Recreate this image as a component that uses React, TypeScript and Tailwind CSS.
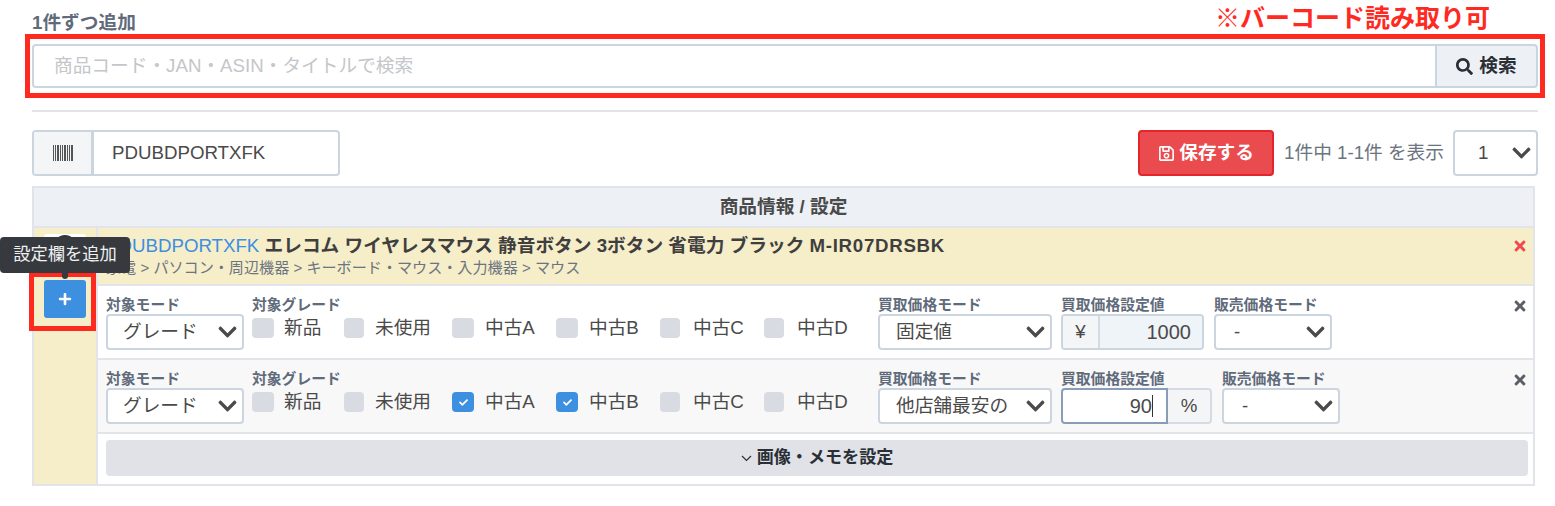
import React from "react";
import { FaChevronDown, FaTimes, FaPlus, FaSearch, FaCheck, FaRegSave } from "react-icons/fa";

const font = "font-['Liberation_Sans','Noto_Sans_CJK_JP',sans-serif]";

function Select({ value, className }: { value: string; className: string }) {
  return (
    <div className={`relative h-[36px] rounded-[4px] border-2 border-[#cbd5e0] bg-white text-[18.7px] text-[#4a4a4a] flex items-center ${className}`}>
      <span className="whitespace-nowrap">{value}</span>
      <FaChevronDown className="absolute right-[4px] top-1/2 -translate-y-1/2 w-[21px] h-[21px] text-[#4a4a4a]" />
    </div>
  );
}

function Grade({ label, checked, cell, box, gap }: { label: string; checked?: boolean; cell: string; box: string; gap: string }) {
  return (
    <div className={`flex items-center shrink-0 ${cell} ${gap}`}>
      <span className={`${box} h-[20px] rounded-[4px] flex items-center justify-center ${checked ? "bg-[#3d8fe0]" : "bg-[#d8dce2]"}`}>
        {checked && <FaCheck className="w-[11px] h-[9px] text-white" />}
      </span>
      <span className="text-[18.7px] leading-[20px] text-[#4a4a4a] whitespace-nowrap">{label}</span>
    </div>
  );
}

function Label({ children }: { children: React.ReactNode }) {
  return <div className="text-[14.8px] leading-[18px] font-bold text-[#5f6b7a] whitespace-nowrap">{children}</div>;
}

function Row({ checkedAB, alt }: { checkedAB?: boolean; alt?: boolean }) {
  return (
    <div className={`relative h-[74px] pl-[8px] pt-[10px] flex border-b-2 border-[#e2e4ea] ${alt ? "bg-[#f8f8f9]" : "bg-white"}`}>
      <div className="w-[146px] shrink-0">
        <Label>対象モード</Label>
        <Select value="グレード" className="w-[138px] pl-[15px]" />
      </div>
      <div className="w-[626px] shrink-0">
        <Label>対象グレード</Label>
        <div className="flex mt-[4px]">
          <Grade label="新品" cell="w-[92px]" box="w-[22px]" gap="gap-[10px]" />
          <Grade label="未使用" cell="w-[108px]" box="w-[20px]" gap="gap-[11px]" />
          <Grade label="中古A" checked={checkedAB} cell="w-[104px]" box="w-[22px]" gap="gap-[11px]" />
          <Grade label="中古B" checked={checkedAB} cell="w-[104px]" box="w-[22px]" gap="gap-[11px]" />
          <Grade label="中古C" cell="w-[104px]" box="w-[20px]" gap="gap-[13px]" />
          <Grade label="中古D" cell="w-[90px]" box="w-[20px]" gap="gap-[13px]" />
        </div>
      </div>
      <div className="w-[183px] shrink-0">
        <Label>買取価格モード</Label>
        <Select value={alt ? "他店舗最安の" : "固定値"} className="w-[174px] pl-[16px]" />
      </div>
      {alt ? (
        <div className="w-[161px] shrink-0">
          <Label>買取価格設定値</Label>
          <div className="flex h-[36px] w-[151px] text-[18.7px] text-[#4a4a4a]">
            <div className="w-[107px] rounded-l-[4px] border-2 border-[#8a9db8] bg-white flex items-center justify-end pr-[13px] text-[20px]">
              <span className="border-r-[1.5px] border-[#333] leading-[22px]">90</span>
            </div>
            <div className="flex-1 rounded-r-[4px] border-2 border-l-0 border-[#d5dbe4] bg-[#f4f5f7] flex items-center justify-center">%</div>
          </div>
        </div>
      ) : (
        <div className="w-[153px] shrink-0">
          <Label>買取価格設定値</Label>
          <div className="flex h-[36px] w-[143px] text-[18.7px] text-[#4a4a4a] rounded-[4px] border-2 border-[#cbd5e0] overflow-hidden">
            <div className="w-[37px] bg-[#f4f5f7] border-r-2 border-[#d5dbe4] flex items-center justify-center">¥</div>
            <div className="flex-1 bg-[#eef4f8] flex items-center justify-end pr-[11px] text-[20px]">1000</div>
          </div>
        </div>
      )}
      <div>
        <Label>販売価格モード</Label>
        <Select value="-" className="w-[118px] pl-[18px]" />
      </div>
      <FaTimes className="absolute right-[5px] top-[12px] w-[16px] h-[16px] text-[#5a5f66]" />
    </div>
  );
}

export default function App() {
  return (
    <div className={`relative w-[1555px] h-[506px] bg-white overflow-hidden pl-[32px] pr-[17px] ${font}`}>
      <div className="absolute right-[65px] top-[3px] text-[25px] leading-[30px] font-bold text-[#ff2a1f] whitespace-nowrap z-10">※バーコード読み取り可</div>

      <div className="pt-[12px] text-[18.7px] leading-[22px] font-bold text-[#5f6b7a]">1件ずつ追加</div>

      <div className="relative mt-[10px] flex h-[44px]">
        <div className="absolute left-[-7px] right-[-7px] top-[-10px] bottom-[-10px] border-[5px] border-[#ff2a1f] pointer-events-none" />
        <input
          readOnly
          placeholder="商品コード・JAN・ASIN・タイトルで検索"
          className="flex-1 min-w-0 rounded-l-[4px] border-2 border-[#cbd5e0] pl-[20px] text-[18.7px] bg-white placeholder:text-[#c4c6c9] outline-none"
        />
        <div className="w-[101px] rounded-r-[4px] border-2 border-l-0 border-[#cbd5e0] bg-[#edf0f5] flex items-center justify-center gap-[6px] text-[18.7px] font-bold text-[#2a2f36]">
          <FaSearch className="w-[17px] h-[17px]" />
          検索
        </div>
      </div>

      <div className="mt-[22px] h-[2px] bg-[#e2e4ea]" />

      <div className="mt-[18px] h-[46px] flex items-center">
        <div className="flex h-full w-[308px] rounded-[4px] border-2 border-[#cbd5e0] overflow-hidden">
          <div className="w-[60px] bg-[#f4f5f7] border-r-[3px] border-[#cbd5e0] flex items-center justify-center">
            <svg width="20" height="16" viewBox="0 0 20 16" className="text-[#555]" fill="currentColor">
              <path d="M0 0h1v16H0zM2 0h1v16H2zM4 0h2v16H4zM7 0h1v16H7zM9 0h1v16H9zM11 0h2v16h-2zM14 0h1v16h-1zM16 0h1v16h-1zM18 0h2v16h-2z" />
            </svg>
          </div>
          <div className="flex-1 pl-[18px] flex items-center text-[18.7px] text-[#4a4a4a]">PDUBDPORTXFK</div>
        </div>
        <div className="ml-auto w-[136px] h-full rounded-[4px] border-2 border-[#e4262c] bg-[#e94b4e] flex items-center justify-center gap-[4px] text-white text-[18.7px] font-bold">
          <FaRegSave className="w-[17px] h-[17px]" />
          保存する
        </div>
        <div className="ml-[10px] text-[18.7px] text-[#6b7480] whitespace-nowrap">1件中 1-1件 を表示</div>
        <Select value="1" className="ml-[9px] !h-[46px] w-[85px] pl-[23px]" />
      </div>

      <div className="mt-[10px] w-[1503px] border-2 border-[#e2e4ea]">
        <div className="h-[40px] pt-[1px] bg-[#edf0f5] border-b-2 border-[#e2e4ea] flex items-center justify-center text-[18.7px] font-bold text-[#4a4a4a]">
          商品情報 / 設定
        </div>
        <div className="flex bg-[#f6edc9]">
          <div className="relative w-[64px] shrink-0 border-r-2 border-[#e2e4ea]">
            <div className="absolute left-[10px] top-[52px] w-[42px] h-[38px] rounded-[3px] bg-[#3d8fe0] flex items-center justify-center">
              <FaPlus className="w-[14px] h-[14px] text-white" />
            </div>
          </div>
          <div className="flex-1 min-w-0">
            <div className="relative h-[58px] pl-[8px] pt-[6px] border-b-2 border-[#e2e4ea]">
              <div className="text-[18.7px] leading-[24px] font-bold text-[#3f3f3f] whitespace-nowrap">
                <span className="font-normal text-[#3d8fe0]">PDUBDPORTXFK</span> エレコム ワイヤレスマウス 静音ボタン 3ボタン 省電力 ブラック <span className="tracking-[0.7px]">M-IR07DRSBK</span>
              </div>
              <div className="text-[15.1px] leading-[20px] text-[#6b7480] whitespace-nowrap">
                家電 &gt; パソコン・周辺機器 &gt; キーボード・マウス・入力機器 &gt; マウス
              </div>
              <FaTimes className="absolute right-[5px] top-[10px] w-[16px] h-[16px] text-[#ee4a4d]" />
            </div>
            <Row />
            <Row checkedAB alt />
            <div className="h-[50px] bg-white pl-[8px] pr-[5px] pt-[6px]">
              <div className="h-[36px] rounded-[4px] bg-[#e0e2e7] flex items-center justify-center gap-[5px] text-[17.1px] font-bold text-[#2a2f36]">
                <svg width="11" height="7" viewBox="0 0 11 7" fill="none" stroke="#2a2f36" strokeWidth="1.2"><path d="M1 1l4.5 4.5L10 1" /></svg>
                画像・メモを設定
              </div>
            </div>
          </div>
        </div>
      </div>

      {/* tooltip over the add button */}
      <div className="absolute left-[44px] top-[234px] w-[42px] h-[10px] bg-white rounded-t-[3px]" />
      <div className="absolute left-[29px] top-[272px] w-[67px] h-[59px] border-[5px] border-[#ff2a1f] pointer-events-none" />
      <div className="absolute left-[53px] top-[235px] w-[24px] h-[30px] rounded-[12px] bg-[#333539]" />
      <div className="absolute left-[62px] top-[272px] w-[6px] h-[7px] rounded-b-[3px] bg-[#363a3f]" />
      <div className="absolute left-0 top-[237px] w-[130px] h-[36px] rounded-[4px] bg-[#363a3f] flex items-center justify-center text-[17.3px] text-[#f0f0f0] whitespace-nowrap">
        設定欄を追加
      </div>
    </div>
  );
}
